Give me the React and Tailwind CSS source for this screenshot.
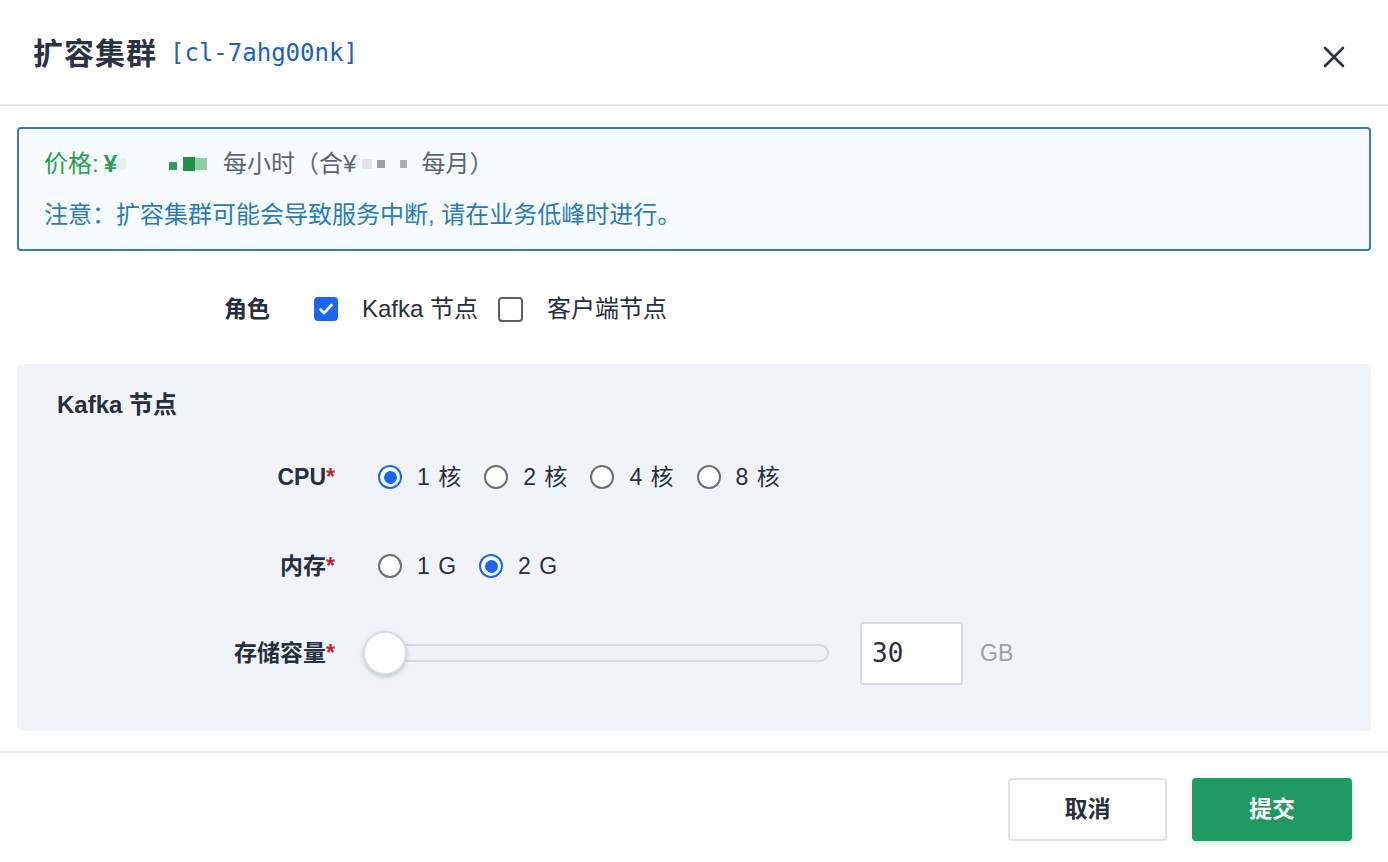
import React from 'react'

const font = { fontFamily: '"Liberation Sans", "Noto Sans CJK SC", sans-serif' }

function Radio({ checked, label }) {
  return (
    <label className="flex items-center gap-[15px]">
      {checked ? (
        <span className="w-[24px] h-[24px] rounded-full border-2 border-[#1a66f0] bg-white flex items-center justify-center">
          <span className="w-[13px] h-[13px] rounded-full bg-[#1a66f0]" />
        </span>
      ) : (
        <span className="w-[24px] h-[24px] rounded-full border-2 border-[#6b6e73] bg-white" />
      )}
      <span className="text-[23px] text-[#262f3d] tracking-[1px]">{label}</span>
    </label>
  )
}

function Checkbox({ checked, label }) {
  return (
    <label className="flex items-center gap-[24px]">
      {checked ? (
        <span className="w-[24px] h-[24px] rounded-[4px] bg-[#1a66f0] flex items-center justify-center">
          <svg width="16" height="16" viewBox="0 0 16 16" fill="none">
            <path d="M2.5 8.5l3.5 3.5 7.5-8" stroke="#fff" strokeWidth="2.6" strokeLinecap="round" strokeLinejoin="round" />
          </svg>
        </span>
      ) : (
        <span className="w-[25px] h-[25px] rounded-[4px] border-2 border-[#5b5e63] bg-white" />
      )}
      <span className="text-[24px] text-[#262f3d]">{label}</span>
    </label>
  )
}

function Label({ children }) {
  return (
    <div className="w-[318px] text-right text-[23px] font-bold text-[#262f3d]">
      {children}
      <span className="text-[#c4262e]">*</span>
    </div>
  )
}

export default function App() {
  return (
    <div className="w-[1388px] h-[862px] bg-white flex flex-col" style={font}>
      <header className="h-[106px] border-b-2 border-[#e6e8eb] flex items-center justify-between pl-[33px] pr-[43px] pt-[2px]">
        <div className="flex items-center gap-[13px]">
          <h1 className="text-[30px] font-bold text-[#2a3342] tracking-[1px]">扩容集群</h1>
          <span className="text-[24px] text-[#1d5fc7]" style={{ fontFamily: '"DejaVu Sans Mono", monospace' }}>
            [cl-7ahg00nk]
          </span>
        </div>
        <svg width="22" height="22" viewBox="0 0 22 22" className="mt-[8px]">
          <path d="M2 2l18 18M20 2L2 20" stroke="#2a3342" strokeWidth="2.6" strokeLinecap="round" />
        </svg>
      </header>

      <main className="flex-1 px-[17px] pt-[21px]">
        <div className="h-[124px] border-2 border-[#3a7db3] rounded-[4px] bg-[#f5fbff] pl-[25px] py-[9px] text-[24px] leading-[51px]">
          <div className="flex items-center">
            <span className="text-[#27a04a]">价格:<span className="ml-[5px] font-bold">¥</span></span>
            <span className="w-[9px] h-[12px] bg-[#e6efe9]" />
            <span className="ml-[43px] w-[8px] h-[8px] bg-[#2e9d56] mt-[4px]" />
            <span className="ml-[6px] w-[12px] h-[14px] bg-[#1f9148]" />
            <span className="w-[12px] h-[12px] bg-[#8fcba4]" />
            <span className="ml-[16px] text-[#5b6470]">每小时（合¥</span>
            <span className="ml-[6px] w-[10px] h-[10px] bg-[#e1e5ea]" />
            <span className="ml-[5px] w-[8px] h-[8px] bg-[#9aa1a8]" />
            <span className="ml-[15px] w-[7px] h-[8px] bg-[#a6adb3]" />
            <span className="ml-[14px] text-[#5b6470]">每月）</span>
          </div>
          <div className="text-[#2a7bb8]">注意：扩容集群可能会导致服务中断, 请在业务低峰时进行。</div>
        </div>

        <div className="mt-[34px] h-[48px] flex items-center">
          <div className="w-[253px] text-right text-[23px] font-bold text-[#262f3d]">角色</div>
          <div className="ml-[44px] flex items-center gap-[20px]">
            <Checkbox checked label="Kafka 节点" />
            <Checkbox label="客户端节点" />
          </div>
        </div>

        <section className="mt-[31px] h-[367px] rounded-[6px] bg-[#f0f4f8] pt-[25px]">
          <h2 className="pl-[40px] h-[32px] leading-[32px] text-[24px] font-bold text-[#262f3d]">Kafka 节点</h2>
          <div className="mt-[32px] h-[48px] flex items-center">
            <Label>CPU</Label>
            <div className="ml-[43px] flex items-center gap-[22px]">
              <Radio checked label="1 核" />
              <Radio label="2 核" />
              <Radio label="4 核" />
              <Radio label="8 核" />
            </div>
          </div>
          <div className="mt-[41px] h-[48px] flex items-center">
            <Label>内存</Label>
            <div className="ml-[43px] flex items-center gap-[22px]">
              <Radio label="1 G" />
              <Radio checked label="2 G" />
            </div>
          </div>
          <div className="mt-[31px] h-[64px] flex items-center">
            <Label>存储容量</Label>
            <div className="ml-[28px] flex items-center">
              <div className="relative w-[466px] h-[44px] flex items-center">
                <div className="ml-[20px] flex-1 h-[18px] rounded-full bg-[#eef2f6] border-2 border-[#d3d9e0]" />
                <div className="absolute left-0 top-0 w-[44px] h-[44px] rounded-full bg-white border-2 border-[#d6dde3] shadow-[0_2px_4px_rgba(80,120,110,0.35)]" />
              </div>
              <div className="ml-[31px] w-[103px] h-[63px] bg-white border-2 border-[#d9dde2] rounded-[3px] flex items-center pl-[10px]">
                <span className="text-[26px] text-[#262f3d]" style={{ fontFamily: '"DejaVu Sans Mono", monospace' }}>30</span>
              </div>
              <span className="ml-[17px] text-[23px] text-[#9aa1a9]">GB</span>
            </div>
          </div>
        </section>
      </main>

      <footer className="h-[111px] border-t-2 border-[#e6e8eb] flex items-start justify-end gap-[25px] pr-[36px] pt-[25px]">
        <button className="w-[159px] h-[63px] rounded-[4px] border-2 border-[#dfe3e8] bg-white text-[23px] font-bold text-[#262f3d]">
          取消
        </button>
        <button className="w-[160px] h-[63px] rounded-[4px] bg-[#1f9a62] text-[23px] font-bold text-white shadow-[0_2px_6px_rgba(31,154,98,0.2)]">
          提交
        </button>
      </footer>
    </div>
  )
}
